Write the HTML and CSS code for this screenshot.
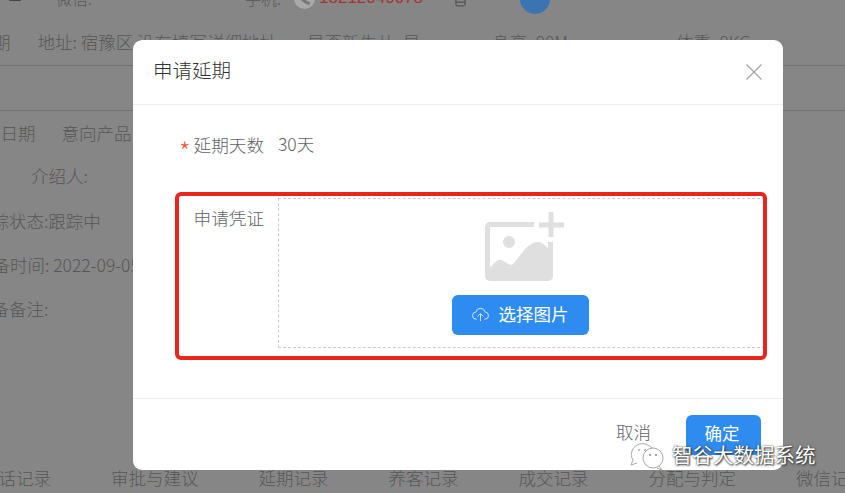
FILE: index.html
```html
<!DOCTYPE html>
<html lang="zh-CN">
<head>
<meta charset="utf-8">
<title>申请延期</title>
<link rel="stylesheet" href="styles.css">
</head>
<body>
<div class="page">
  <div class="row row-top">
    <svg class="ic-trash" viewBox="0 0 12 12"><rect x="0" y="0" width="12" height="8" rx="1" fill="#444"/><path d="M3 0v7M6 0v7M9 0v7" stroke="#888" stroke-width="1"/></svg>
    <span class="t-wx">微信:</span>
    <span class="t-mobile">手机:</span>
    <svg class="ic-phone" viewBox="0 0 20 20"><circle cx="10" cy="10" r="10" fill="#a9a9a9"/><path d="M5 5c1 5 4 8 10 10" stroke="#777" stroke-width="3" fill="none"/></svg>
    <span class="t-num">18212040078</span>
    <svg class="ic-mobile" viewBox="0 0 12 18"><rect x="1" y="1" width="10" height="16" rx="2" fill="none" stroke="#555" stroke-width="1.4"/><path d="M1 13h10" stroke="#555" stroke-width="1.4"/></svg>
    <span class="ic-circle"></span>
  </div>
  <div class="row row-info ruled">
    <span class="i-a">期</span>
    <span class="i-b">地址: 宿豫区 没有填写详细地址</span>
    <span class="i-c">是否新生儿: 是</span>
    <span class="i-d">身高: 80M</span>
    <span class="i-e">体重: 8KG</span>
  </div>
  <div class="row row-blank ruled"></div>
  <div class="row row-date">
    <span class="s-a">效日期</span>
    <span class="s-b">意向产品</span>
  </div>
  <div class="row row-h"><span class="s-c">介绍人:</span></div>
  <div class="row row-h row-status"><span class="s-d">跟踪状态:跟踪中</span></div>
  <div class="row row-h"><span class="s-e">准备时间: 2022-09-05</span></div>
  <div class="row row-h"><span class="s-f">准备备注:</span></div>
  <div class="fill"></div>
  <div class="row tabs">
    <span class="tab-first">通话记录</span>
    <span>审批与建议</span>
    <span>延期记录</span>
    <span>养客记录</span>
    <span>成交记录</span>
    <span>分配与判定</span>
    <span>微信记录</span>
  </div>

  <div class="modal">
    <div class="modal-head">
      <span class="modal-title">申请延期</span>
      <svg class="ic-close" viewBox="0 0 16 16"><path d="M.5.5l15 15M15.500.5l-15 15" stroke="#a3a3a3" stroke-width="1.2" fill="none"/></svg>
    </div>
    <div class="modal-body">
      <div class="form-row form-row-days">
        <label class="form-label"><span class="req">*</span>延期天数</label>
        <span class="form-value">30天</span>
      </div>
      <div class="form-row form-row-proof">
        <label class="form-label label-top">申请凭证</label>
        <div class="drop">
          <svg class="ic-image" viewBox="0 0 80 70">
            <path d="M49 12.500H5a2.500 2.500 0 0 0-2.500 2.500V64A2.500 2.500 0 0 0 5 66.500H63a2.500 2.500 0 0 0 2.500-2.500V30" fill="none" stroke="#dfdfdf" stroke-width="5"/>
            <path d="M5 66V56C10 50 13 47 16 48C20 49 25 55 28 52C35 45 42 30 53 30C58 30 63 36 66 40V66Z" fill="#dfdfdf"/>
            <circle cx="24" cy="30" r="6" fill="#dfdfdf"/>
            <path d="M66 0V25M54 13H79" stroke="#dfdfdf" stroke-width="5" fill="none"/>
          </svg>
          <button class="btn btn-primary btn-upload" type="button">
            <svg class="ic-upload" viewBox="0 0 18 16"><path d="M5 13H4.500a3.800 3.800 0 0 1-.4-7.600 5 5 0 0 1 9.800 0 3.800 3.800 0 0 1-.4 7.600H13" fill="none" stroke="#d9ebff" stroke-width="1"/><path d="M9 15V7.500M6 10l3-3 3 3" fill="none" stroke="#d9ebff" stroke-width="1"/></svg>
            <span>选择图片</span>
          </button>
        </div>
      </div>
    </div>
    <div class="modal-foot">
      <span class="btn-text">取消</span>
      <button class="btn btn-primary btn-ok" type="button">确定</button>
    </div>
  </div>

  <div class="annotation"></div>

  <div class="watermark">
    <svg class="ic-wechat" viewBox="0 0 36 32">
      <g fill="none" stroke="#a8a8a8" stroke-width="1">
        <path d="M3 21C1 18 1 15 2 12C4 6 10 4 15 5C18 6 20 7 22 9"/>
        <path d="M3 21L1 26L7 24"/>
        <circle cx="23" cy="19" r="10"/>
        <path d="M29 27L32 31L27 29"/>
      </g>
      <circle cx="9" cy="11" r="1" fill="#aaa"/><circle cx="15" cy="11" r="1" fill="#aaa"/>
      <circle cx="20" cy="16" r="1" fill="#888"/><circle cx="26" cy="16" r="1" fill="#888"/>
    </svg>
    <span class="wm-text">智谷大数据系统</span>
  </div>
</div>
</body>
</html>
```

FILE: styles.css
```css
* { box-sizing: border-box; }
html, body { margin: 0; padding: 0; }
body { width: 845px; height: 493px; overflow: hidden; }
.page {
  position: relative;
  width: 845px;
  height: 493px;
  overflow: hidden;
  background: #868686;
  color: #565656;
  font-family: "Noto Sans CJK SC", "Liberation Sans", sans-serif;
  font-size: 17.500px;
  font-weight: 300;
  display: flex;
  flex-direction: column;
}
.row { display: flex; align-items: center; white-space: nowrap; flex: none; }
.row-top { height: 28px; margin-top: -16px; font-size: 16px; }
.ic-trash { width: 12px; height: 12px; margin-left: 9px; margin-top: 2px; }
.t-wx { margin-left: 35px; }
.t-mobile { margin-left: 153px; }
.ic-phone { width: 21px; height: 21px; margin-left: 13px; }
.t-num { margin-left: 4px; color: #a5332e; font-family: "Liberation Sans", sans-serif; font-size: 17px; }
.ic-mobile { width: 11px; height: 17px; margin-left: 32px; }
.ic-circle { width: 30px; height: 30px; border-radius: 50%; background: #3b74b1; margin-left: 54px; margin-top: 2px; }

.row-info { height: 54px; padding-top: 6px; margin-left: -7px; }
.ruled { border-bottom: 1px solid #707070; }
.i-b { margin-left: 27px; }
.i-c { margin-left: 30px; }
.i-d { margin-left: 72px; }
.i-e { margin-left: 108px; }
.row-blank { height: 45px; }
.row-date { height: 42px; }
.row-h { height: 44px; }
.row-status { margin-top: 1px; }
.s-a { margin-left: -17px; }
.s-b { margin-left: 26px; }
.s-c { margin-left: 31px; }
.s-d { margin-left: -26px; }
.s-e { margin-left: -25px; }
.s-f { margin-left: -26px; }
.fill { flex: 1; }
.tabs { height: 28px; gap: 60px; padding-bottom: 4px; }
.tab-first { margin-left: -19px; }

.modal {
  position: absolute;
  left: 133px;
  top: 40px;
  width: 650px;
  height: 430px;
  background: #fff;
  border-radius: 9px;
  display: flex;
  flex-direction: column;
  color: #606266;
}
.modal-head {
  height: 65px;
  flex: none;
  border-bottom: 1px solid #ebeef5;
  display: flex;
  align-items: center;
  justify-content: space-between;
  padding: 0 21px 1px 20px;
}
.modal-title { font-size: 19.500px; color: #303133; font-weight: 300; margin-top: -5px; }
.ic-close { width: 16px; height: 16px; }
.modal-body { flex: 1; padding: 19px 18px 0 45px; }
.form-row { display: flex; gap: 14px; }
.form-row-days { height: 40px; align-items: center; }
.form-row-proof { margin-top: 34px; }
.form-label { width: 86px; text-align: right; flex: none; white-space: nowrap; font-size: 17.600px; }
.label-top { padding-top: 7px; line-height: 26px; }
.req { color: #ea5a3c; margin-right: 3px; font-size: 26px; line-height: 0; vertical-align: -10px; }
.form-value { font-size: 17.500px; margin-top: -2px; }
.drop {
  width: 487px;
  height: 150px;
  border: 1px dashed #cbcbcb;
  display: flex;
  flex-direction: column;
  align-items: center;
  padding-top: 13px;
}
.ic-image { width: 80px; height: 70px; margin-left: -3px; flex: none; transform: translateX(5px); }
.btn { border: 0; font-family: inherit; font-weight: 400; color: #fff; background: #2e8bef; border-radius: 6px; padding: 0; }
.btn-upload {
  width: 137px;
  height: 40px;
  margin-top: 13px;
  margin-left: -3px;
  padding-bottom: 4px;
  font-size: 17.500px;
  display: flex;
  align-items: center;
  justify-content: center;
  gap: 10px;
  flex: none;
}
.ic-upload { width: 17px; height: 15px; margin-top: 3px; }
.modal-foot {
  height: 72px;
  flex: none;
  border-top: 1px solid #ebeef5;
  display: flex;
  justify-content: flex-end;
  align-items: flex-start;
  gap: 35px;
  padding: 16px 22px 0 0;
}
.btn-text { font-size: 17.500px; line-height: 34px; }
.btn-ok { width: 75px; height: 40px; font-size: 17.500px; padding: 0 3px 6px 0; }

.annotation {
  position: absolute;
  left: 175px;
  top: 192px;
  width: 592px;
  height: 168px;
  border: 4px solid #e8261f;
  border-radius: 6px;
}
.watermark {
  position: absolute;
  left: 630px;
  top: 439px;
  display: flex;
  align-items: center;
  gap: 6px;
}
.ic-wechat { width: 36px; height: 32px; }
.wm-text {
  font-size: 20.500px;
  color: #fff;
  font-weight: 400;
  text-shadow: 0 0 2px #333, 1px 1px 2px #333;
  white-space: nowrap;
  margin-top: -2px;
}
```
